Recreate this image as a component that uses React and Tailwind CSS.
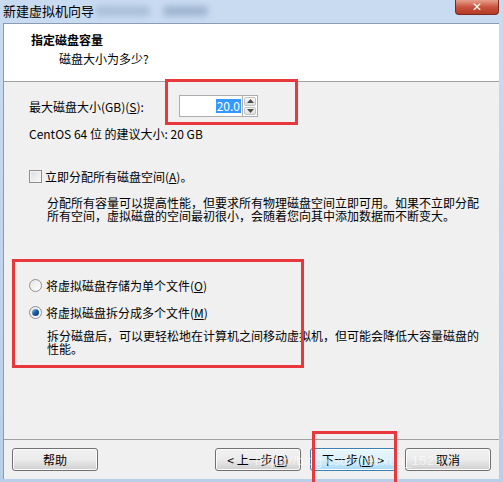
import React from "react";

const font = { fontFamily: '"Noto Sans CJK SC", "Noto Sans", sans-serif' };

function Btn({ children, def, className = "" }) {
  return (
    <div
      className={
        "h-[23px] w-[86px] rounded-[3px] border flex items-center justify-center text-[12px] text-black " +
        (def
          ? "border-[#3c7fb1] bg-gradient-to-b from-[#eaf6fd] via-[#d9f0fc] to-[#a7d9f5] shadow-[inset_0_0_0_1px_#ffffff]"
          : "border-[#707070] bg-gradient-to-b from-[#f2f2f2] via-[#ebebeb] to-[#cfcfcf] shadow-[inset_0_0_0_1px_#fcfcfc]") +
        " " +
        className
      }
    >
      {children}
    </div>
  );
}

function Radio({ checked }) {
  return (
    <div className="w-[13px] h-[13px] rounded-full border border-[#8e8f8f] bg-gradient-to-br from-[#e6e6e6] to-[#ffffff] flex items-center justify-center">
      {checked && (
        <div className="w-[7px] h-[7px] rounded-full bg-gradient-to-br from-[#8fd1f5] via-[#1b5a9a] to-[#0c3f78]" />
      )}
    </div>
  );
}

export default function App() {
  return (
    <div
      className="relative w-[503px] h-[482px] overflow-hidden bg-gradient-to-b from-[#c8dbf1] to-[#b9cfe9] text-[12px] text-black"
      style={font}
    >
      {/* title bar */}
      <div className="relative h-[23px] flex items-start">
        <div className="absolute left-[95px] top-[6px] w-[55px] h-[10px] rounded bg-[#9fb4cf] blur-[3px] opacity-70" />
        <div className="absolute left-[163px] top-[6px] w-[45px] h-[10px] rounded bg-[#8ea5c2] blur-[3px] opacity-70" />
        <span className="relative pl-[3px] pt-[2px] text-[13px] leading-[17px] text-black">新建虚拟机向导</span>
        <div className="absolute right-[4px] top-0 w-[44px] h-[15px] rounded-b-[4px] border border-[#7a2a21] border-t-0 bg-gradient-to-b from-[#e7a08f] via-[#c8533e] to-[#b53a24] flex items-center justify-center">
          <span className="text-white text-[12px] font-bold leading-none" style={{ fontFamily: '"DejaVu Sans", sans-serif' }}>
            ✕
          </span>
        </div>
      </div>

      {/* client area */}
      <div className="absolute left-[3px] right-[4px] top-[23px] bottom-[3px] flex flex-col bg-[#f0f0f0] border-l border-t border-[#8a9cb3]">
        {/* header */}
        <div className="h-[58px] bg-white border-b border-[#a0a0a0] pl-[27px] pt-[8px] shrink-0">
          <div className="font-bold text-[12px] leading-[16px]">指定磁盘容量</div>
          <div className="pl-[28px] mt-[3px] text-[12px] leading-[16px]">磁盘大小为多少?</div>
        </div>

        {/* body */}
        <div className="flex-1 pl-[25px] pr-[10px] pt-[13px]">
          <div className="flex items-center h-[22px]">
            <span className="w-[150px] leading-[15px]">
              最大磁盘大小(GB)(<span className="underline">S</span>):
            </span>
            <div className="flex h-[22px]">
              <div className="w-[63px] h-[22px] border border-[#abadb3] border-r-0 bg-white flex items-center justify-end pr-[1px]">
                <span className="bg-[#3399ff] text-white leading-[14px] px-[1px] text-[12px]">20.0</span>
              </div>
              <div className="flex flex-col w-[16px] h-[22px] border border-[#abadb3] p-[1px] gap-[1px] bg-white">
                <div className="flex-1 rounded-[2px] border border-[#c2c2c2] bg-gradient-to-b from-[#f7f7f7] to-[#dedede] flex items-center justify-center">
                  <svg width="7" height="4" viewBox="0 0 7 4"><path d="M0 4 L3.5 0 L7 4 Z" fill="#4d4d4d" /></svg>
                </div>
                <div className="flex-1 rounded-[2px] border border-[#c2c2c2] bg-gradient-to-b from-[#f7f7f7] to-[#dedede] flex items-center justify-center">
                  <svg width="7" height="4" viewBox="0 0 7 4"><path d="M0 0 L3.5 4 L7 0 Z" fill="#4d4d4d" /></svg>
                </div>
              </div>
            </div>
          </div>
          <div className="mt-[9px] leading-[15px]">CentOS 64 位 的建议大小: 20 GB</div>

          <div className="mt-[28px] flex items-center gap-[3px] h-[15px]">
            <div className="w-[13px] h-[13px] border border-[#8e8f8f] bg-gradient-to-br from-[#dcdcdc] to-[#fbfbfb] shadow-[inset_0_0_0_1px_#f4f4f4]" />
            <span className="leading-[15px]">
              立即分配所有磁盘空间(<span className="underline">A</span>)。
            </span>
          </div>
          <div className="mt-[12px] pl-[18px] leading-[13px]">
            <div>分配所有容量可以提高性能，但要求所有物理磁盘空间立即可用。如果不立即分配</div>
            <div>所有空间，虚拟磁盘的空间最初很小，会随着您向其中添加数据而不断变大。</div>
          </div>

          <div className="mt-[56px] flex items-center gap-[4px] h-[15px]">
            <Radio />
            <span className="leading-[15px]">
              将虚拟磁盘存储为单个文件(<span className="underline">O</span>)
            </span>
          </div>
          <div className="mt-[12px] flex items-center gap-[4px] h-[15px]">
            <Radio checked />
            <span className="leading-[15px]">
              将虚拟磁盘拆分成多个文件(<span className="underline">M</span>)
            </span>
          </div>
          <div className="mt-[9px] pl-[18px] leading-[13px]">
            <div>拆分磁盘后，可以更轻松地在计算机之间移动虚拟机，但可能会降低大容量磁盘的</div>
            <div>性能。</div>
          </div>
        </div>

        {/* footer */}
        <div className="h-[40px] shrink-0 border-t border-[#a0a0a0] flex items-start pt-[8px] px-[8px]">
          <Btn>帮助</Btn>
          <div className="flex-1" />
          <Btn>&lt; 上一步(<span className="underline">B</span>)</Btn>
          <Btn def className="ml-[9px]">
            下一步(<span className="underline">N</span>) &gt;
          </Btn>
          <Btn className="ml-[9px]">取消</Btn>
        </div>
      </div>

      {/* watermark */}
      <div className="absolute left-[255px] top-[451px] text-[13px] text-white/60 tracking-wide pointer-events-none" style={{ fontFamily: '"Liberation Sans", sans-serif' }}>
        https://blog.csdn.net/xun_1523
      </div>

      {/* red annotation boxes */}
      <div className="absolute left-[165px] top-[79px] w-[133px] h-[46px] border-[3px] border-[#e8383d] pointer-events-none" />
      <div className="absolute left-[12px] top-[259px] w-[292px] h-[109px] border-[3px] border-[#e8383d] pointer-events-none" />
      <div className="absolute left-[312px] top-[431px] w-[85px] h-[54px] border-[3px] border-[#e8383d] pointer-events-none" />
    </div>
  );
}
